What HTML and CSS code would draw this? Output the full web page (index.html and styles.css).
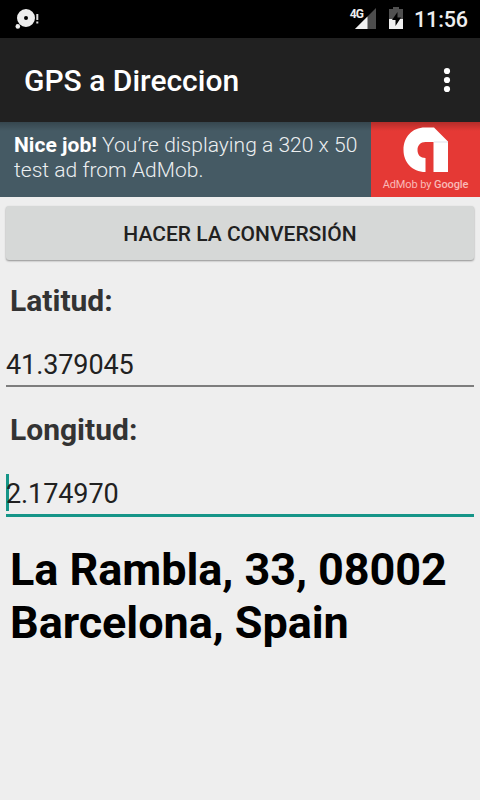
FILE: index.html
```html
<!DOCTYPE html>
<html lang="es">
<head>
<meta charset="utf-8">
<title>GPS a Direccion</title>
<link rel="stylesheet" href="styles.css">
</head>
<body>
<header class="status">
  <svg class="notification" width="26" height="22" viewBox="0 0 26 22">
    <path fill="#eee" fill-rule="evenodd" d="M11 1a9 9 0 1 0 0 18a9 9 0 0 0 0-18zM11 8a2 2 0 1 1 0 4a2 2 0 0 1 0-4z"/>
    <circle cx="2.8" cy="18.4" r="2.3" fill="#eee"/>
    <path stroke="#ddd" stroke-width="2" d="M22.3 6v6M22.3 13.5v2"/>
  </svg>
  <div class="signal">
    <span class="network">4G</span>
    <svg width="21" height="21" viewBox="0 0 21 21">
      <path fill="#4d4d4d" d="M21 0v21H0z"/>
      <path fill="#f0f0f0" d="M12.5 8.5V21H0z"/>
    </svg>
  </div>
  <svg class="battery" width="14" height="22" viewBox="0 0 14 22">
    <path fill="#505050" d="M4 0h6v2h4v10H0V2h4z"/>
    <path fill="#f0f0f0" d="M0 12h14v10H0z"/>
    <path fill="#000" d="M8.500 5L3 13h3.500v6L12 10.500H8.500z"/>
  </svg>
  <span class="clock">11:56</span>
</header>
<div class="toolbar">
  <h1>GPS a Direccion</h1>
  <svg width="8" height="26" viewBox="0 0 8 26" fill="#fff">
    <circle cx="4" cy="4" r="3.1"/><circle cx="4" cy="13" r="3.1"/><circle cx="4" cy="22" r="3.1"/>
  </svg>
</div>
<div class="ad">
  <p class="ad-text"><b>Nice job!</b> You’re displaying a 320 x 50<br>test ad from AdMob.</p>
  <div class="admob">
    <svg width="46" height="46" viewBox="0 0 46 46">
      <path fill="#fff" d="M22.500 45C9 45 .5 35 .5 23C.5 10 9 .5 22 .5h9L45 14.500V45H30.500V15H22.500C17.500 15 14.500 18.500 14.500 23c0 5 3 8 8 8z"/>
      <path fill="#dfe0ea" d="M31 14.500h14v1H31z"/>
    </svg>
    <span class="admob-name">AdMob by <b>Google</b></span>
  </div>
</div>
<main>
  <button class="convert">HACER LA CONVERSIÓN</button>
  <div class="label">Latitud:</div>
  <div class="field">41.379045</div>
  <div class="label second">Longitud:</div>
  <div class="field focused">2.174970</div>
  <p class="result">La Rambla, 33, 08002<br>Barcelona, Spain</p>
</main>
</body>
</html>
```
FILE: styles.css
```css
* { box-sizing: border-box; }
body {
  margin: 0;
  height: 800px;
  overflow: hidden;
  background: #eee;
  font-family: Roboto, sans-serif;
  color: #212121;
}
h1, p { margin: 0; }
svg { display: block; flex: none; }
.status {
  height: 38px;
  background: #000;
  display: flex;
  align-items: flex-start;
  padding: 0 12px 0 15px;
}
.notification { margin-top: 8px; }
.signal {
  display: flex;
  align-items: flex-start;
  margin: 8px 13px 0 auto;
}
.network {
  font-size: 12px;
  line-height: 12px;
  font-weight: 700;
  letter-spacing: -1px;
  margin-right: -8px;
  color: #eee;
}
.battery { margin: 7px 11px 0 0; }
.clock {
  color: #eee;
  font-size: 21.5px;
  line-height: 40px;
  font-weight: 500;
  letter-spacing: -.1px;
}
.toolbar {
  height: 84px;
  background: #212121;
  display: flex;
  align-items: center;
  justify-content: space-between;
  padding: 0 29px 0 24px;
}
.toolbar h1 {
  color: #fff;
  font-size: 30px;
  line-height: 36px;
  font-weight: 500;
  padding-top: 2px;
}
.ad {
  height: 75px;
  display: flex;
  background: linear-gradient(rgba(0, 0, 0, .22), transparent 9px) #455a64;
}
.ad-text {
  width: 371px;
  padding: 11px 0 0 14px;
  font-size: 21px;
  line-height: 25px;
  font-weight: 300;
  letter-spacing: .03px;
  color: #eceff1;
  white-space: nowrap;
}
.ad-text b { font-weight: 700; color: #fff; }
.admob {
  flex: 1;
  background: linear-gradient(rgba(0, 0, 0, .22), transparent 9px) #e53935;
  display: flex;
  flex-direction: column;
  align-items: center;
  padding-top: 5px;
}
.admob-name {
  font-size: 11px;
  line-height: 13px;
  margin-top: 5px;
  letter-spacing: -.1px;
  color: #f9b9b7;
  white-space: nowrap;
}
.admob-name b { font-weight: 500; }
main { padding: 9px 6px 0; }
.convert {
  display: block;
  width: 100%;
  height: 54px;
  border: 0;
  border-radius: 3px;
  background: #d6d8d7;
  box-shadow: 0 1px 2px rgba(0, 0, 0, .4);
  font: 500 21px/24px Roboto, sans-serif;
  color: #212121;
  padding: 2px 0 0;
}
.label {
  margin-top: 23px;
  padding-left: 4px;
  font-size: 30px;
  line-height: 36px;
  font-weight: 700;
  color: #333;
}
.label.second { margin-top: 25px; }
.field {
  height: 41px;
  margin-top: 27px;
  font-size: 27px;
  line-height: 39px;
  letter-spacing: -.1px;
  border-bottom: 2px solid #7d7d7d;
}
.focused {
  height: 43px;
  margin-top: 26px;
  line-height: 41px;
  border-bottom: 3px solid #159588;
  background: linear-gradient(#159588, #159588) 0 0 / 3px 37px no-repeat;
}
.result {
  margin-top: 26px;
  padding-left: 4px;
  font-size: 45px;
  line-height: 53px;
  font-weight: 700;
  letter-spacing: -.06px;
  color: #000;
  white-space: nowrap;
}
```
